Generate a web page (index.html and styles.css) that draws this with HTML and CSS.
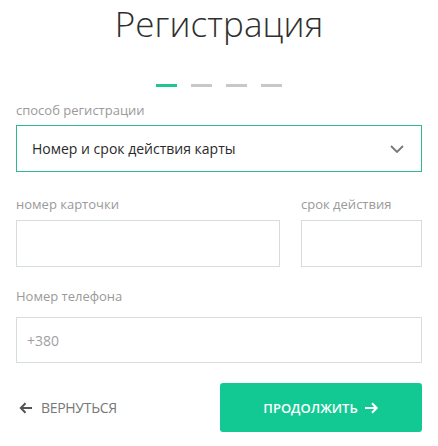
FILE: index.html
```html
<!DOCTYPE html>
<html lang="ru">
<head>
<meta charset="utf-8">
<title>Регистрация</title>
<link rel="stylesheet" href="styles.css">
</head>
<body>
<main class="page">
  <h1 class="title">Регистрация</h1>
  <div class="steps">
    <span class="step step-active"></span>
    <span class="step"></span>
    <span class="step"></span>
    <span class="step"></span>
  </div>

  <label class="label label-first">способ регистрации</label>
  <div class="select">
    <span class="select-text">Номер и срок действия карты</span>
    <svg class="chevron" width="14" height="8" viewBox="0 0 14 8"><path d="M1 1 L7 7 L13 1" fill="none" stroke="#777" stroke-width="1.8"/></svg>
  </div>

  <div class="card-row">
    <div class="field">
      <label class="label">номер карточки</label>
      <div class="input"></div>
    </div>
    <div class="field">
      <label class="label">срок действия</label>
      <div class="input"></div>
    </div>
  </div>

  <label class="label label-phone">Номер телефона</label>
  <div class="input input-phone"><span class="placeholder">+380</span></div>

  <div class="actions">
    <a class="back">
      <svg class="back-arrow" width="14" height="12" viewBox="0 0 14 12"><path d="M13 6 H2 M6.5 1.2 L1.8 6 L6.5 10.8" fill="none" stroke="#555" stroke-width="2"/></svg>
      <span>ВЕРНУТЬСЯ</span>
    </a>
    <button class="next">
      <span>ПРОДОЛЖИТЬ</span>
      <svg class="next-arrow" width="15" height="12" viewBox="0 0 15 12"><path d="M1 6 H12.5 M8 1.2 L12.7 6 L8 10.8" fill="none" stroke="#fff" stroke-width="2"/></svg>
    </button>
  </div>
</main>
</body>
</html>
```

FILE: styles.css
```css
* { box-sizing: border-box; }
html, body { margin: 0; padding: 0; background: #fff; }
body { font-family: "Open Sans", "Liberation Sans", sans-serif; color: #333; }

.page {
  width: 406px;
  margin-left: 16px;
  display: flex;
  flex-direction: column;
}

.title {
  margin: 0;
  padding-top: 2px;
  font-family: "Open Sans", sans-serif;
  font-weight: 300;
  font-size: 35px;
  line-height: 44px;
  text-align: center;
  color: #2f2f2f;
  letter-spacing: 0.1px;
}

.steps {
  display: flex;
  justify-content: center;
  gap: 14px;
  margin-top: 38px;
  height: 3px;
}
.step { width: 21px; height: 3px; background: #c8c8c8; }
.step-active { background: #1fc592; }

.label {
  display: block;
  font-size: 13px;
  line-height: 16px;
  color: #9a9a9a;
}
.label-first { margin-top: 15px; }

.select {
  margin-top: 7px;
  height: 47px;
  border: 1px solid #2fb893;
  display: flex;
  align-items: center;
  justify-content: space-between;
  padding: 0 17px 0 15px;
}
.select-text { font-size: 14px; color: #2a2a2a; }
.chevron { margin-top: 1px; }

.card-row {
  display: grid;
  grid-template-columns: 1fr 121px;
  column-gap: 21px;
  margin-top: 24px;
}
.field { display: flex; flex-direction: column; }
.input {
  margin-top: 8px;
  height: 47px;
  border: 1px solid #d6dddd;
  display: flex;
  align-items: center;
}

.label-phone { margin-top: 21px; }
.input-phone { margin-top: 13px; height: 46px; padding-left: 10px; }
.placeholder { font-size: 14px; color: #a0a0a0; }

.actions {
  margin-top: 20px;
  display: flex;
  align-items: center;
  justify-content: space-between;
}
.back {
  display: flex;
  align-items: center;
  gap: 8px;
  padding-left: 3px;
  font-size: 14px;
  letter-spacing: -0.3px;
  color: #777;
}
.next {
  width: 202px;
  height: 49px;
  border: none;
  border-radius: 3px;
  background: #13c993;
  color: #fff;
  font-family: "Open Sans", sans-serif;
  font-size: 13px;
  font-weight: 600;
  display: flex;
  align-items: center;
  justify-content: center;
  gap: 6px;
  padding: 0;
}
```
